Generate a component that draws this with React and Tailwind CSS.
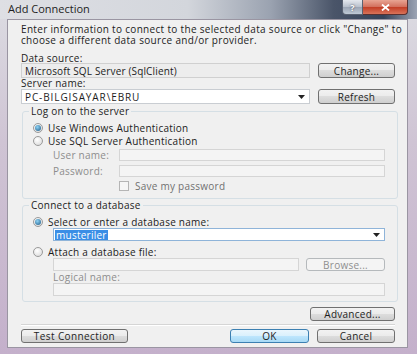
import React from "react";

function Btn({ children, className = "", kind = "normal" }) {
  const look =
    kind === "disabled"
      ? "border-[#b5b9bc] bg-[#f4f4f4] text-[#8f8f8f]"
      : kind === "default"
      ? "border-[#3c7fb1] bg-[linear-gradient(#eaf6fd,#d9f0fc_50%,#bee6fd_50%,#a7d9f5)] text-[#1e1e1e]"
      : "border-[#707070] bg-[linear-gradient(#f2f2f2,#ebebeb_50%,#dddddd_50%,#cfcfcf)] text-[#1e1e1e]";
  return (
    <div
      className={`flex items-center justify-center rounded-[3px] border text-[10px] leading-none ${look} ${className}`}
    >
      {children}
    </div>
  );
}

function Radio({ checked }) {
  return (
    <span className="flex h-[10px] w-[10px] shrink-0 items-center justify-center rounded-full border border-[#9a9a9a] bg-[radial-gradient(circle_at_40%_35%,#ffffff,#d6d6d6)]">
      {checked && (
        <span className="h-[6px] w-[6px] rounded-full bg-[radial-gradient(circle_at_40%_35%,#8fd3f5,#1c5a86)]" />
      )}
    </span>
  );
}

function Arrow() {
  return (
    <svg width="7" height="4" viewBox="0 0 7 4" className="shrink-0">
      <path d="M0 0H7L3.5 4Z" fill="#222" />
    </svg>
  );
}

export default function App() {
  return (
    <div className="flex h-[354px] w-[417px] flex-col overflow-hidden bg-[linear-gradient(#dcdce2,#cfc4d4_40%,#c4b0cb)] font-['Open_Sans','Noto_Sans',sans-serif] font-medium tracking-[0.25px] text-[#1c1c1c]">
      {/* Title bar */}
      <div className="flex h-[19px] shrink-0 items-start bg-[linear-gradient(90deg,#dedfe4_0%,#d3d6dc_45%,#9aa2b0_65%,#4a5569_80%,#36435a_92%,#9ca4b4_100%)]">
        <div className="pl-[8px] pt-[3px] text-[11px] leading-[12px] tracking-[0px] text-[#1e1e1e]">
          Add Connection
        </div>
        <div className="ml-auto mr-[9px] flex h-[15px]">
          <div className="flex w-[21px] items-center justify-center rounded-bl-[4px] border border-t-0 border-[#5a6272] bg-[linear-gradient(#e4e8ee,#b8c0cc_50%,#9aa4b4_50%,#c0cad6)] text-[9px] font-bold leading-none text-white [text-shadow:0_0_2px_#334]">
            ?
          </div>
          <div className="flex w-[45px] items-center justify-center rounded-br-[4px] border border-l-0 border-t-0 border-[#5a3030] bg-[linear-gradient(#e8a493,#d26f5c_50%,#c23c24_50%,#d9735a)]">
            <svg width="9" height="7" viewBox="0 0 9 7">
              <path d="M1 0.5L8 6.5M8 0.5L1 6.5" stroke="#fff" strokeWidth="1.8" />
            </svg>
          </div>
        </div>
      </div>

      {/* Body */}
      <div className="flex min-h-0 flex-1">
        <div className="w-[7px] shrink-0" />
        <div className="flex w-[401px] shrink-0 flex-col border border-[#9a95a2] bg-[#f0f0f0] pl-[13px] pr-[12px] text-[10px]">
          <div className="mt-[4px] whitespace-nowrap leading-[11px] tracking-[0.32px]">
            Enter information to connect to the selected data source or click "Change" to
            <br />
            choose a different data source and/or provider.
          </div>

          <div className="mt-[7px] leading-[10px]">Data source:</div>
          <div className="flex h-[15px] items-stretch gap-[8px]">
            <div className="flex w-[289px] items-center border border-[#d0d0d0] bg-[#ededed] pl-[3px] leading-none tracking-[0.15px]">
              Microsoft SQL Server (SqlClient)
            </div>
            <Btn className="w-[77px]">Change...</Btn>
          </div>

          <div className="leading-[10px]">Server name:</div>
          <div className="mt-[1px] flex h-[15px] items-stretch gap-[8px]">
            <div className="flex w-[289px] items-center border border-[#c9cdd2] bg-white pl-[3px] pr-[4px] leading-none">
              <span className="tracking-[0.9px]">PC-BILGISAYAR\EBRU</span>
              <span className="ml-auto">
                <Arrow />
              </span>
            </div>
            <Btn className="w-[77px]">Refresh</Btn>
          </div>

          {/* Group 1 */}
          <fieldset className="ml-[1px] mt-[2px] w-[376px] rounded-[3px] border border-[#d5dfe5] pb-[7px] pl-[10px] pr-[12px]">
            <legend className="ml-[-4px] px-[2px] leading-[11px]">Log on to the server</legend>
            <div className="mt-[5px] flex h-[12px] items-center gap-[5px] leading-none">
              <Radio checked />
              <span>Use Windows Authentication</span>
            </div>
            <div className="mt-[1px] flex h-[12px] items-center gap-[5px] leading-none">
              <Radio />
              <span>Use SQL Server Authentication</span>
            </div>
            <div className="mt-[2px] flex h-[12px] items-center">
              <span className="w-[86px] pl-[20px] leading-none text-[#8d8d8d]">User name:</span>
              <div className="h-[12px] flex-1 border border-[#d5d5d5] bg-[#f4f4f4]" />
            </div>
            <div className="mt-[4px] flex h-[12px] items-center">
              <span className="w-[86px] pl-[20px] leading-none text-[#8d8d8d]">Password:</span>
              <div className="h-[12px] flex-1 border border-[#d5d5d5] bg-[#f4f4f4]" />
            </div>
            <div className="mt-[4px] flex h-[10px] items-center pl-[86px]">
              <span className="h-[10px] w-[10px] border border-[#b5b5b5] bg-[#f6f6f6]" />
              <span className="ml-[6px] leading-none text-[#707070]">Save my password</span>
            </div>
          </fieldset>

          {/* Group 2 */}
          <fieldset className="ml-[1px] mt-[1px] w-[376px] rounded-[3px] border border-[#d5dfe5] pb-[5px] pl-[10px] pr-[12px]">
            <legend className="ml-[-4px] px-[2px] leading-[11px]">Connect to a database</legend>
            <div className="mt-[6px] flex h-[10px] items-center gap-[5px] leading-none">
              <Radio checked />
              <span>Select or enter a database name:</span>
            </div>
            <div className="ml-[20px] mt-[1px] flex h-[13px] items-center border border-[#8fb4d9] bg-white pl-[1px] pr-[4px]">
              <span className="bg-[#3a8ee6] px-[1px] leading-[10px] text-white">musteriler</span>
              <span className="ml-auto">
                <Arrow />
              </span>
            </div>
            <div className="mt-[6px] flex h-[10px] items-center gap-[5px] leading-none">
              <Radio />
              <span>Attach a database file:</span>
            </div>
            <div className="ml-[20px] mt-[1px] flex h-[13px] items-stretch gap-[7px]">
              <div className="w-[246px] border border-[#d5d5d5] bg-[#f4f4f4]" />
              <Btn kind="disabled" className="flex-1">Browse...</Btn>
            </div>
            <div className="ml-[20px] mt-[1px] leading-[10px] text-[#8d8d8d]">Logical name:</div>
            <div className="ml-[20px] mt-[1px] h-[13px] border border-[#d5d5d5] bg-[#f4f4f4]" />
          </fieldset>

          <div className="mt-[5px] flex justify-end">
            <Btn className="h-[14px] w-[85px]">Advanced...</Btn>
          </div>

          <div className="mt-[3px] h-[2px] border-t border-[#d5d5d5] bg-white" />

          <div className="mt-[3px] flex h-[14px] items-stretch">
            <Btn className="w-[107px] tracking-[0.4px]">Test Connection</Btn>
            <Btn kind="default" className="ml-auto w-[79px]">OK</Btn>
            <Btn className="ml-[8px] w-[78px]">Cancel</Btn>
          </div>
        </div>
        <div className="flex-1" />
      </div>
      <div className="h-[6px] shrink-0" />
    </div>
  );
}
